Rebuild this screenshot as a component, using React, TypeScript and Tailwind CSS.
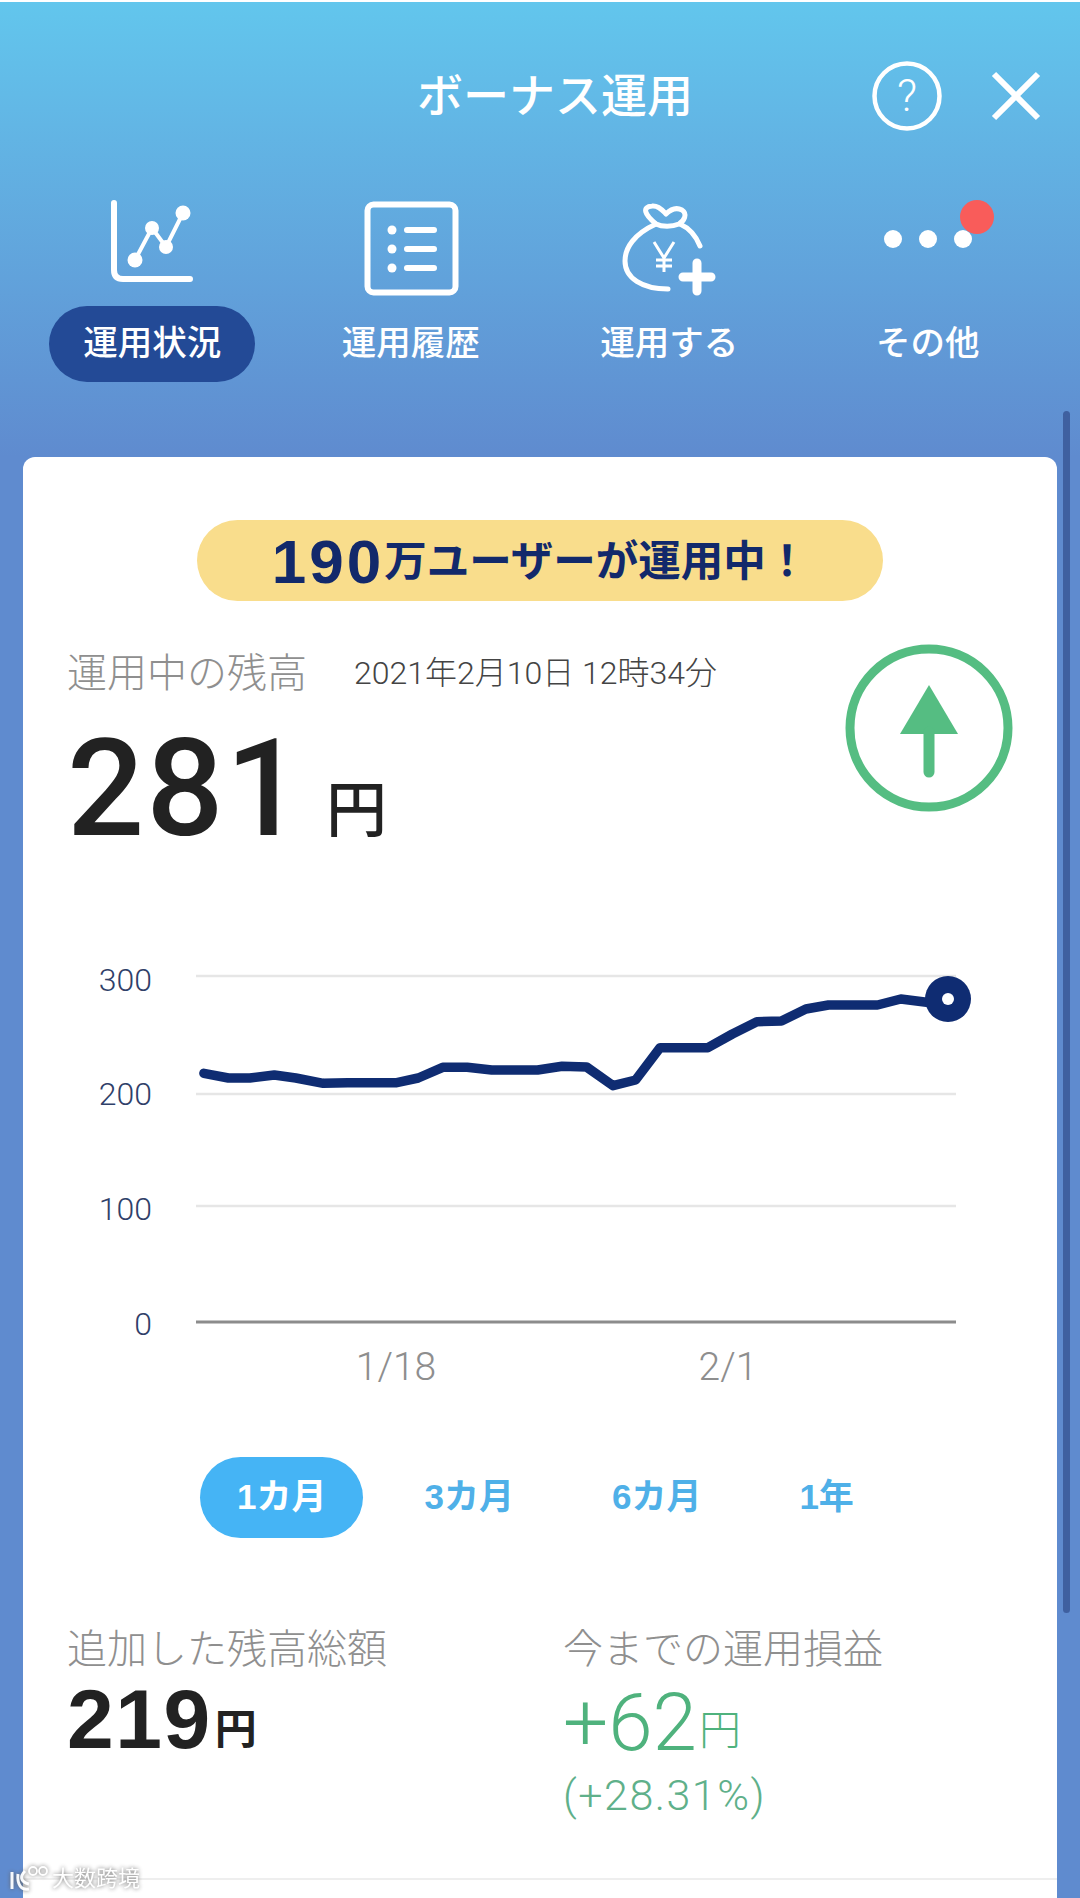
const pts: [number, number][] = [[235,403],[275,417],[310,417],[350,408],[385,417],[430,433],[470,431],[550,431],[585,417],[625,385],[665,385],[705,393],[780,393],[820,382],[860,384],[903,440],[940,423],[980,326],[1058,326],[1098,285],[1138,248],[1178,246],[1218,210],[1255,198],[1335,198],[1373,180],[1415,190],[1450,180]];
const linePath = pts.map(([x, y]) => `${(60 + x / 1.633).toFixed(1)},${(940 + y / 3).toFixed(1)}`).join(" ");

function ChartIcon() {
  return (
    <svg width="100" height="100" viewBox="102 196 100 100" fill="none" stroke="white">
      <path d="M114 201V268q0 9 9 9H190" strokeWidth="6" strokeLinecap="round" />
      <path d="M135 258L152 226L166 245L183 211" strokeWidth="4" />
      <g fill="white" stroke="none">
        <circle cx="135" cy="258" r="7.5" />
        <circle cx="152" cy="226" r="7" />
        <circle cx="166" cy="245" r="7" />
        <circle cx="183" cy="211" r="7.5" />
      </g>
    </svg>
  );
}

function ListIcon() {
  return (
    <svg width="100" height="100" viewBox="361 196 100 100" fill="none" stroke="white">
      <rect x="367.5" y="202.5" width="88" height="88" rx="6" strokeWidth="6" />
      <path d="M407 228H434M407 247H434M407 266H434" strokeWidth="6" strokeLinecap="round" />
      <g fill="white" stroke="none">
        <circle cx="392" cy="228" r="4.5" />
        <circle cx="392" cy="247" r="4.5" />
        <circle cx="392" cy="266" r="4.5" />
      </g>
    </svg>
  );
}

function BagIcon() {
  return (
    <svg width="100" height="100" viewBox="617 196 100 100" fill="none" stroke="white" strokeLinecap="round">
      <path d="M654 222C632 232 623 246 623 259C623 276 640 287 666 287" strokeWidth="5" />
      <path d="M678 222C687 226 694 234 698 244" strokeWidth="5" />
      <path d="M654 222C642 212 640 205 650 204C657 203 661 209 664 212C668 208 674 205 680 208C686 212 682 219 677 222C670 225 660 225 654 222Z" strokeWidth="5" strokeLinejoin="round" />
      <path d="M652 240L662 256L672 240M662 256V270M654 258H670M654 264H670" strokeWidth="3" strokeLinecap="butt" />
      <path d="M681 275H709M695 261V289" strokeWidth="9" />
    </svg>
  );
}

function MoreIcon() {
  return (
    <svg width="100" height="100" viewBox="878 196 100 100" className="overflow-visible">
      <circle cx="893" cy="237" r="9" fill="white" />
      <circle cx="928" cy="237" r="9" fill="white" />
      <circle cx="963" cy="237" r="9" fill="white" />
      <circle cx="977" cy="215" r="17" fill="#f95c5a" />
    </svg>
  );
}

const tabs = [
  { label: "運用状況", icon: <ChartIcon />, active: true },
  { label: "運用履歴", icon: <ListIcon />, active: false },
  { label: "運用する", icon: <BagIcon />, active: false },
  { label: "その他", icon: <MoreIcon />, active: false },
];

function LineChart() {
  const grid = [977, 1095, 1207];
  return (
    <svg width="1034" height="430" viewBox="23 960 1034 430" className="block font-['Roboto',sans-serif]">
      {grid.map((y) => (
        <line key={y} x1="196" x2="956" y1={y} y2={y} stroke="#e6e6e6" strokeWidth="2.5" />
      ))}
      <line x1="196" x2="956" y1="1323" y2="1323" stroke="#8c8c8c" strokeWidth="3" />
      <g fill="#2f4069" fontSize="32" fontWeight="300" textAnchor="end">
        <text x="152" y="992">300</text>
        <text x="152" y="1106">200</text>
        <text x="152" y="1221">100</text>
        <text x="152" y="1336">0</text>
      </g>
      <g fill="#8e8e8e" fontSize="39" fontWeight="300" textAnchor="middle">
        <text x="396" y="1381">1/18</text>
        <text x="728" y="1381">2/1</text>
      </g>
      <polyline points={linePath} fill="none" stroke="#0f2c72" strokeWidth="9.5" strokeLinejoin="round" strokeLinecap="round" />
      <circle cx="948" cy="1000" r="23" fill="#0f2c72" />
      <circle cx="948" cy="1000" r="6" fill="white" />
    </svg>
  );
}

const periods = [
  { label: "1カ月", active: true },
  { label: "3カ月", active: false },
  { label: "6カ月", active: false },
  { label: "1年", active: false },
];

export default function App() {
  return (
    <div className="relative h-[1898px] w-[1080px] overflow-hidden bg-[#5f8bcf] font-['Liberation_Sans','Noto_Sans_CJK_JP',sans-serif]">
      <div className="h-[2px] bg-white" />
      <div className="bg-gradient-to-b from-[#62c6ed] to-[#5f8bcf] pb-[75px]">
        <div className="flex items-center pt-[58px] pl-[417px]">
          <h1 className="w-[272px] text-center text-[46px] leading-[68px] font-medium whitespace-nowrap text-white">ボーナス運用</h1>
          <svg width="72" height="72" viewBox="0 0 72 72" fill="none" className="ml-[182px]">
            <circle cx="36" cy="36" r="32.5" stroke="white" strokeWidth="4.5" />
            <text x="36" y="51" textAnchor="middle" fontSize="44" fill="white" fontWeight="300" fontFamily="Roboto">?</text>
          </svg>
          <svg width="50" height="50" viewBox="0 0 50 50" fill="none" className="ml-[48px]" stroke="white" strokeWidth="6">
            <path d="M3 3L47 47M47 3L3 47" />
          </svg>
        </div>
        <div className="mx-[23px] mt-[66px] grid grid-cols-4">
          {tabs.map((t) => (
            <div key={t.label} className="flex flex-col items-center">
              <div className="h-[108px]">{t.icon}</div>
              <div className={`flex h-[76px] w-[206px] items-center justify-center rounded-[38px] text-[34.5px] font-medium whitespace-nowrap text-white ${t.active ? "bg-[#234a96]" : ""}`}>
                {t.label}
              </div>
            </div>
          ))}
        </div>
      </div>

      <div className="absolute top-[411px] left-[1063px] h-[1202px] w-[7px] rounded-full bg-[#3f60a0]" />

      <main className="mx-[23px] h-[1441px] rounded-t-[12px] bg-white pt-[63px]">
        <div className="mx-auto flex h-[81px] w-[686px] items-center justify-center rounded-full bg-[#f9dd8c] pt-[3px] font-bold text-[#12296b]">
          <span className="text-[62px] leading-none tracking-[3px]">190</span>
          <span className="text-[42.5px] leading-none">万ユーザーが運用中！</span>
        </div>

        <div className="mt-[43px] flex justify-between px-[44px]">
          <div>
            <div className="flex items-center gap-[47px]">
              <span className="text-[40px] leading-[58px] font-light text-[#8f8f8f]">運用中の残高</span>
              <span className="font-['Roboto','Noto_Sans_CJK_JP',sans-serif] text-[32px] leading-[58px] font-light text-[#444]">2021年2月10日 12時34分</span>
            </div>
            <div className="mt-[24px] flex items-end">
              <span className="font-['Roboto',sans-serif] text-[136px] leading-[126px] font-medium tracking-[2px] text-[#222]">281</span>
              <span className="mb-[9px] ml-[21px] text-[61px] leading-[64px] font-medium text-[#222]">円</span>
            </div>
          </div>
          <svg width="168" height="168" viewBox="0 0 168 168" fill="none" className="ml-[1px]">
            <circle cx="84" cy="84" r="79" stroke="#55bd82" strokeWidth="9" />
            <path d="M84 41L113 90H55Z" fill="#55bd82" />
            <path d="M84 88V128" stroke="#55bd82" strokeWidth="11" strokeLinecap="round" />
          </svg>
        </div>

        <div className="mt-[107px]">
          <LineChart />
        </div>

        <div className="mt-[68px] flex pl-[177px]">
          {periods.map((p, i) => (
            <div
              key={p.label}
              className={`flex h-[81px] items-center justify-center rounded-full px-[37px] text-[35px] font-bold whitespace-nowrap ${i > 0 ? "ml-[24px]" : ""} ${p.active ? "bg-[#45b4f5] text-white" : "text-[#4fb0e8]"}`}
            >
              {p.label}
            </div>
          ))}
        </div>

        <div className="mt-[83px] flex px-[44px]">
          <div className="w-[496px]">
            <div className="text-[40px] leading-[56px] font-light text-[#8f8f8f]">追加した残高総額</div>
            <div className="flex items-baseline font-bold text-[#222]">
              <span className="text-[84px] leading-[84px] tracking-[1.5px]">219</span>
              <span className="ml-[3px] -translate-y-[4px] text-[42px] leading-[84px]">円</span>
            </div>
          </div>
          <div>
            <div className="text-[40px] leading-[56px] font-light text-[#8f8f8f]">今までの運用損益</div>
            <div className="mt-[4px] flex items-baseline text-[#4fb27d]">
              <span className="font-['Roboto',sans-serif] text-[80px] leading-[84px] font-light">+62</span>
              <span className="ml-[2px] -translate-y-[5px] text-[42px] leading-[84px] font-light">円</span>
            </div>
            <div className="mt-[-6px] font-['Roboto',sans-serif] text-[43px] leading-[46px] font-light tracking-[1.5px] text-[#5fb08a]">(+28.31%)</div>
          </div>
        </div>

        <div className="mt-[60px] h-[2px] bg-[#eeeeee]" />
      </main>

      <div className="absolute top-[1864px] left-[8px] flex items-center gap-[4px] opacity-95 [filter:drop-shadow(0_0_2px_#666)]">
        <svg width="40" height="30" viewBox="0 0 40 30" fill="none" stroke="white" strokeWidth="3">
          <path d="M4 8V25M10 10C9 20 13 27 21 25M17 7C12 12 12 18 21 20" />
          <circle cx="25" cy="7" r="4" strokeWidth="1.8" />
          <circle cx="35" cy="7" r="4" strokeWidth="1.8" />
        </svg>
        <span className="text-[22px] leading-[28px] text-white">大数跨境</span>
      </div>
    </div>
  );
}
